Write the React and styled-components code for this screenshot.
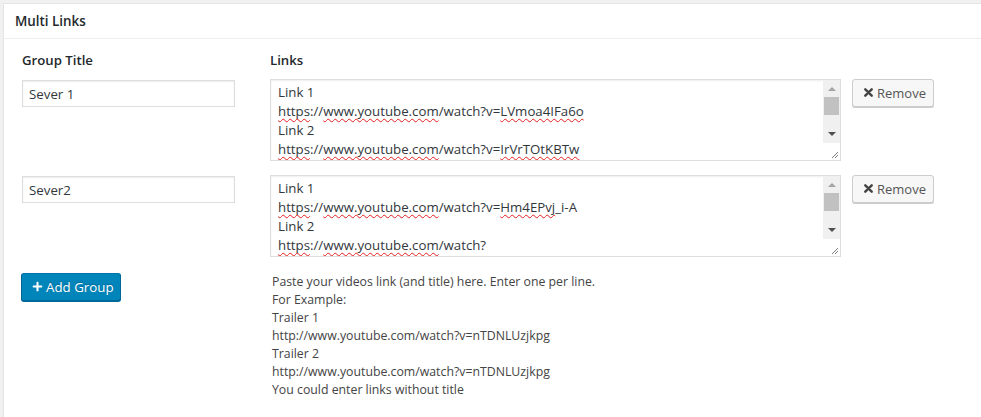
import styled, { createGlobalStyle } from "styled-components";
import { FaPlus } from "react-icons/fa";

// data
const groups = [
  {
    title: "Sever 1",
    lines: [
      [{ t: "Link 1" }],
      [
        { t: "https", bad: true },
        { t: "://" },
        { t: "www.youtube.com", bad: true },
        { t: "/watch?v=" },
        { t: "LVmoa4IFa6o", bad: true },
      ],
      [{ t: "Link 2" }],
      [
        { t: "https", bad: true },
        { t: "://" },
        { t: "www.youtube.com", bad: true },
        { t: "/watch?v=" },
        { t: "IrVrTOtKBTw", bad: true },
      ],
    ],
  },
  {
    title: "Sever2",
    lines: [
      [{ t: "Link 1" }],
      [
        { t: "https", bad: true },
        { t: "://" },
        { t: "www.youtube.com", bad: true },
        { t: "/watch?v=" },
        { t: "Hm4EPvj", bad: true },
        { t: "_i-A" },
      ],
      [{ t: "Link 2" }],
      [
        { t: "https", bad: true },
        { t: "://" },
        { t: "www.youtube.com", bad: true },
        { t: "/watch?" },
      ],
    ],
  },
];

const helpLines = [
  "Paste your videos link (and title) here. Enter one per line.",
  "For Example:",
  "Trailer 1",
  "http://www.youtube.com/watch?v=nTDNLUzjkpg",
  "Trailer 2",
  "http://www.youtube.com/watch?v=nTDNLUzjkpg",
  "You could enter links without title",
];

function TimesIcon() {
  return (
    <svg width="9" height="9" viewBox="0 0 9 9">
      <path d="M1.3 1.3 L7.7 7.7 M7.7 1.3 L1.3 7.7" stroke="#444" strokeWidth="2.4" strokeLinecap="round" />
    </svg>
  );
}

function LinksBox({ lines }) {
  return (
    <LinksArea>
      <LinksText>
        {lines.map((line, i) => (
          <div key={i}>
            {line.map((part, j) =>
              part.bad ? <Misspelled key={j}>{part.t}</Misspelled> : <span key={j}>{part.t}</span>
            )}
          </div>
        ))}
      </LinksText>
      <ScrollTrack>
        <ScrollArrow $up />
        <ScrollThumb />
        <ScrollArrow />
      </ScrollTrack>
      <ResizeCorner>
        <svg width="9" height="9" viewBox="0 0 9 9">
          <path d="M8 2 L2 8 M8 5 L5 8" stroke="#808080" strokeWidth="1" />
        </svg>
      </ResizeCorner>
    </LinksArea>
  );
}

export default function App() {
  return (
    <>
      <GlobalStyle />
      <Panel>
        <PanelHeader>Multi Links</PanelHeader>
        <PanelBody>
          <GroupGrid>
            <ColumnLabel>Group Title</ColumnLabel>
            <ColumnLabel>Links</ColumnLabel>
            <div />
            {groups.map((g, i) => (
              <GroupRow key={i}>
                <TitleInput defaultValue={g.title} />
                <LinksBox lines={g.lines} />
                <RemoveButton>
                  <TimesIcon />
                  Remove
                </RemoveButton>
              </GroupRow>
            ))}
            <AddButton>
              <FaPlus size={11} />
              Add Group
            </AddButton>
            <HelpText>
              {helpLines.map((l, i) => (
                <div key={i}>{l}</div>
              ))}
            </HelpText>
          </GroupGrid>
        </PanelBody>
      </Panel>
    </>
  );
}

const GlobalStyle = createGlobalStyle`
  html, body {
    margin: 0;
    background: #f1f1f1;
    font-family: "Segoe UI", "Open Sans", sans-serif;
  }
  #root {
    min-height: 100vh;
  }
`;

const Panel = styled.div`
  margin: 3px 0 0 3px;
  min-height: calc(100vh - 3px);
  box-sizing: border-box;
  background: #fff;
  border: 1px solid #e5e5e5;
  border-right: none;
  border-bottom: none;
`;

const PanelHeader = styled.div`
  height: 34px;
  padding: 0 11px;
  display: flex;
  align-items: center;
  border-bottom: 1px solid #eee;
  font-size: 13.4px;
  font-weight: 600;
  color: #23282d;
`;

const PanelBody = styled.div`
  padding: 12px 18px 20px;
`;

const GroupGrid = styled.div`
  display: grid;
  grid-template-columns: 248px 582px auto;
  align-items: start;
`;

const GroupRow = styled.div`
  display: contents;
`;

const ColumnLabel = styled.div`
  font-size: 13.2px;
  font-weight: 600;
  line-height: 18px;
  color: #23282d;
  margin-bottom: 10px;
`;

const TitleInput = styled.input`
  box-sizing: border-box;
  width: 213px;
  height: 27px;
  margin-top: 1px;
  padding: 0 6px;
  border: 1px solid #ddd;
  box-shadow: inset 0 1px 2px rgba(0, 0, 0, 0.07);
  font-family: inherit;
  font-size: 13.3px;
  color: #32373c;
  outline: none;
`;

const LinksArea = styled.div`
  box-sizing: border-box;
  width: 571px;
  height: 82px;
  margin-bottom: 14px;
  border: 1px solid #ddd;
  box-shadow: inset 0 1px 2px rgba(0, 0, 0, 0.07);
  display: grid;
  grid-template-columns: 1fr 17px;
  grid-template-rows: 1fr 17px;
  overflow: hidden;
`;

const LinksText = styled.div`
  grid-row: 1 / 3;
  padding: 3px 7px;
  font-size: 13.25px;
  line-height: 19px;
  color: #32373c;
  white-space: nowrap;
  overflow: hidden;
`;

const Misspelled = styled.span`
  text-decoration: underline wavy #e52020;
  text-decoration-thickness: 1px;
  text-underline-offset: 2px;
  text-decoration-skip-ink: none;
`;

const ScrollTrack = styled.div`
  background: #f0f0f0;
  display: flex;
  flex-direction: column;
  align-items: center;
  padding: 0 1px;
`;

const ScrollArrow = styled.div`
  width: 0;
  height: 0;
  margin: ${(p) => (p.$up ? "7px 0 6px" : "auto 0 7px")};
  border-left: 4px solid transparent;
  border-right: 4px solid transparent;
  ${(p) => (p.$up ? "border-bottom: 4px solid #a3a3a3;" : "border-top: 4px solid #505050;")}
`;

const ScrollThumb = styled.div`
  width: 15px;
  height: 18px;
  background: #c1c1c1;
`;

const ResizeCorner = styled.div`
  background: #fff;
  display: flex;
  align-items: flex-end;
  justify-content: flex-end;
  padding: 0 1px 1px 0;
`;

const RemoveButton = styled.button`
  box-sizing: border-box;
  width: 82px;
  height: 28px;
  padding: 0 0 1px 11px;
  display: inline-flex;
  align-items: center;
  gap: 4px;
  justify-self: start;
  background: #f7f7f7;
  border: 1px solid #ccc;
  border-radius: 3px;
  box-shadow: 0 1px 0 #ccc;
  font-family: inherit;
  font-size: 13px;
  color: #555;
  white-space: nowrap;
  cursor: pointer;
`;

const AddButton = styled.button`
  box-sizing: border-box;
  justify-self: start;
  width: 100px;
  height: 28px;
  margin-top: 2px;
  margin-left: -1px;
  padding: 0 0 1px 10px;
  display: inline-flex;
  align-items: center;
  gap: 3px;
  background: #0085ba;
  border: 1px solid #0073aa;
  border-color: #0073aa #006799 #006799;
  border-radius: 3px;
  box-shadow: 0 1px 0 #006799;
  text-shadow: 0 -1px 1px #006799;
  font-family: inherit;
  font-size: 13.3px;
  color: #fff;
  white-space: nowrap;
  cursor: pointer;
`;

const HelpText = styled.div`
  margin-top: 2px;
  padding-left: 2px;
  font-size: 12.3px;
  line-height: 18px;
  color: #444;
`;
